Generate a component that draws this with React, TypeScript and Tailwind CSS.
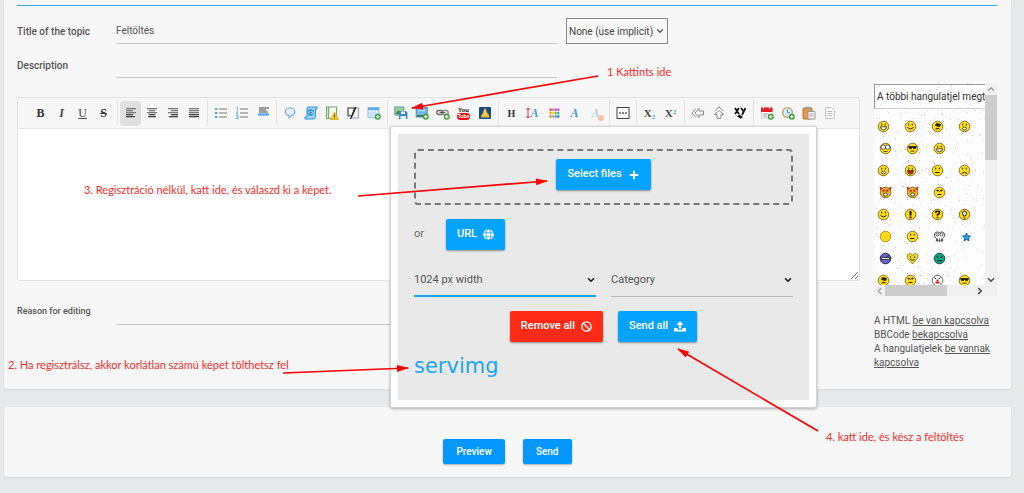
import React from 'react';
import { Ban, ChevronDown, ChevronLeft, ChevronRight, ChevronUp, Plus } from 'lucide-react';
import { FaGlobe } from 'react-icons/fa';

interface Tool {
  name: string;
  icon: React.ReactNode;
  active?: boolean;
}

const Icon: React.FC<{ children: React.ReactNode }> = ({ children }) => (
  <svg width="14" height="14" viewBox="0 0 14 14" aria-hidden="true">
    {children}
  </svg>
);

const Bars: React.FC<{ rows: number[][] }> = ({ rows }) => (
  <Icon>
    {rows.map(([x, w], i) => (
      <rect key={i} x={x} y={2 + i * 2} width={w} height="1.3" fill={i < 3 ? '#777' : '#444'} />
    ))}
  </Icon>
);

const AddBadge = () => (
  <g>
    <circle cx="10.8" cy="10.8" r="3" fill="#3f9a3a" />
    <path d="M10.8 9v3.6M9 10.8h3.6" stroke="#fff" strokeWidth="1.1" />
  </g>
);

const Letter: React.FC<{ className: string; children: React.ReactNode }> = ({ className, children }) => (
  <span className={`font-["Liberation_Serif",serif] text-[12px] leading-none ${className}`}>{children}</span>
);

const GROUPS: Tool[][] = [
  [
    { name: 'Bold', icon: <Letter className="font-bold text-[#333]">B</Letter> },
    { name: 'Italic', icon: <Letter className="font-bold italic text-[#444]">I</Letter> },
    { name: 'Underline', icon: <Letter className="underline text-[#444]">U</Letter> },
    { name: 'Strikethrough', icon: <Letter className="font-bold line-through text-[#333]">S</Letter> },
  ],
  [
    { name: 'Align left', active: true, icon: <Bars rows={[[2, 10], [2, 7], [2, 10], [2, 7], [2, 9]]} /> },
    { name: 'Center', icon: <Bars rows={[[2, 10], [4, 6], [2, 10], [4, 6], [3, 8]]} /> },
    { name: 'Align right', icon: <Bars rows={[[2, 10], [5, 7], [2, 10], [5, 7], [3, 9]]} /> },
    { name: 'Justify', icon: <Bars rows={[[2, 10], [2, 10], [2, 10], [2, 10], [2, 10]]} /> },
  ],
  [
    {
      name: 'Bullet list',
      icon: (
        <Icon>
          <path d="M5 3h8M5 7h8M5 11h8" stroke="#777" />
          <path d="M1 3h2.4M1 7h2.4M1 11h2.4" stroke="#4aa3ee" strokeWidth="2.2" />
        </Icon>
      ),
    },
    {
      name: 'Ordered list',
      icon: (
        <Icon>
          <path d="M5 3h8M5 7h8M5 11h8" stroke="#777" />
          <path d="M1.4 1.5h1v3M1.2 5.8h1.6L1.4 8h1.8M1.2 9.5h1.8v3H1.2M1.6 11h1.4" stroke="#64b0f0" fill="none" />
        </Icon>
      ),
    },
    {
      name: 'Horizontal rule',
      icon: (
        <Icon>
          <path d="M3 2h10M3 4h7M3 6h9" stroke="#444" strokeWidth="1.2" />
          <path d="M2 8.5h11" stroke="#5ba9f5" strokeWidth="2.4" />
        </Icon>
      ),
    },
  ],
  [
    {
      name: 'Quote',
      icon: (
        <Icon>
          <ellipse cx="7" cy="5.8" rx="4.8" ry="3.8" fill="#e2f0fc" stroke="#69a8df" strokeWidth="1.2" />
          <path d="M6 9.2v3.2l3-3.4" fill="#e2f0fc" stroke="#69a8df" />
        </Icon>
      ),
    },
    {
      name: 'Code',
      icon: (
        <Icon>
          <path d="M4 1h9v2h-1.5v7.5q0 2.5-2 2.5H1v-2h2V3q0-2 1-2z" fill="#9bd2f7" stroke="#2f92da" />
          <circle cx="6.5" cy="6.5" r="3.2" fill="#2590dd" />
          <path d="M5.8 5 4.5 6.5 5.8 8M7.4 5l1.3 1.5L7.4 8" stroke="#fff" fill="none" />
        </Icon>
      ),
    },
    {
      name: 'Spoiler',
      icon: (
        <Icon>
          <rect x="1.5" y="1" width="10" height="11.5" fill="#f4fae9" stroke="#78a36d" />
          <path d="M3.5 1v11" stroke="#78b36d" strokeWidth="1.5" />
          <path d="M9.5 6l4 7.5h-8z" fill="#f6cc25" stroke="#d6a514" strokeWidth=".7" />
          <path d="M9.5 8.5v2.3M9.5 11.5v1" stroke="#604600" />
        </Icon>
      ),
    },
    {
      name: 'Hidden',
      icon: (
        <Icon>
          <path d="M7 2h5.5v10H5" fill="#f2f2f2" stroke="#aaa" strokeWidth="1.2" />
          <path d="M2 2h6.5l-2.3 7.5L2 10z" fill="#fff" stroke="#333" strokeWidth="1.1" />
          <path d="M10 1 4.5 13" stroke="#222" strokeWidth="1.3" />
        </Icon>
      ),
    },
    {
      name: 'Table',
      icon: (
        <Icon>
          <rect x="1" y="1.5" width="11" height="10" fill="#e9f5ff" stroke="#86bde8" />
          <path d="M1 3h11" stroke="#63aee9" strokeWidth="2.5" />
          <path d="M1 7h11M1 9.3h11M5 4v8M8.5 4v8" stroke="#acd2ee" strokeWidth=".8" />
          <AddBadge />
        </Icon>
      ),
    },
  ],
  [
    {
      name: 'Host an image',
      icon: (
        <Icon>
          <rect x=".8" y="1" width="9" height="8" fill="#9fd184" stroke="#5c9bc4" />
          <path d="M1.5 8l3-4 3 4z" fill="#378b36" />
          <path d="M5 5h7l1.4 1.4V13H5z" fill="#3d86cc" />
          <path d="M7 5.5h4V8H7zM6.5 10h5.4v3H6.5z" fill="#e8f3fb" />
        </Icon>
      ),
    },
    {
      name: 'Image',
      icon: (
        <Icon>
          <rect x="1.2" y="1.5" width="11" height="9.5" fill="#72b8ed" stroke="#4a8dbe" />
          <path d="M2 9h9.5v1.7H2z" fill="#397747" />
          <path d="M3 4.5h7" stroke="#b7ddf7" strokeWidth="1.5" />
          <AddBadge />
        </Icon>
      ),
    },
    {
      name: 'Link',
      icon: (
        <Icon>
          <rect x=".8" y="4.5" width="6" height="4" rx="2" fill="none" stroke="#666" strokeWidth="1.4" />
          <rect x="5.8" y="4.5" width="6.4" height="4" rx="2" fill="none" stroke="#888" strokeWidth="1.4" />
          <path d="M3.5 6.5h6" stroke="#555" />
          <AddBadge />
        </Icon>
      ),
    },
    {
      name: 'YouTube',
      icon: (
        <span className='flex flex-col items-center font-["Liberation_Sans",sans-serif] text-[6px] font-bold leading-[6px] text-black'>
          <span>You</span>
          <span className="rounded-sm bg-[#ed0c0c] px-px text-[5px] leading-[7px] text-white">Tube</span>
        </span>
      ),
    },
    {
      name: 'Flame',
      icon: (
        <Icon>
          <rect x="1" y="1" width="12" height="12" rx="1" fill="#174c88" />
          <path d="M7 2q2 2 1.6 4.3Q12 9 11 11.5H3Q2.4 9 5 7q.2-3 2-5z" fill="#f6ba24" />
          <path d="M7 5v5" stroke="#fff1a8" />
        </Icon>
      ),
    },
  ],
  [
    { name: 'Headers', icon: <Letter className="font-bold text-[#333]"><span className="text-[10px]">H</span></Letter> },
    {
      name: 'Font size',
      icon: (
        <span className="flex items-center">
          <svg width="4" height="12" viewBox="0 0 4 12" aria-hidden="true">
            <path d="M2 1v10M.5 3 2 1l1.5 2M.5 9 2 11l1.5-2" stroke="#e23434" fill="none" />
          </svg>
          <Letter className="font-bold italic text-[#4a9ae0]">A</Letter>
        </span>
      ),
    },
    {
      name: 'Color',
      icon: (
        <Icon>
          {['#e33', '#f77', '#9a4fd0', '#d3f', '#f90', '#fc3', '#5b5', '#3aa', '#f55', '#6c6', '#38d', '#55b'].map((c, i) => (
            <rect key={i} x={2.5 + (i % 4) * 2.6} y={2.5 + Math.floor(i / 4) * 3.4} width="2" height="2.4" fill={c} />
          ))}
        </Icon>
      ),
    },
    { name: 'Font', icon: <Letter className="font-bold italic text-[#4a94d6]">A</Letter> },
    {
      name: 'Remove formatting',
      icon: (
        <span className="relative flex opacity-40">
          <Letter className="font-bold italic text-[#4a94d6]">A</Letter>
          <span className="absolute -bottom-0.5 -right-1 size-[6px] rounded-full bg-[#f07830]" />
        </span>
      ),
    },
  ],
  [
    {
      name: 'Others',
      icon: (
        <Icon>
          <rect x="1" y="1.5" width="12" height="11" fill="#fff" stroke="#444" />
          <path d="M3.2 7h1.6M6.2 7h1.6M9.2 7h1.6" stroke="#333" strokeWidth="1.5" />
        </Icon>
      ),
    },
  ],
  [
    {
      name: 'Subscript',
      icon: <Letter className="font-bold text-[#444]"><span className="text-[11px]">X</span><sub className="text-[7px] text-[#3a9df0]">2</sub></Letter>,
    },
    {
      name: 'Superscript',
      icon: <Letter className="font-bold text-[#444]"><span className="text-[11px]">X</span><sup className="text-[7px] text-[#3a9df0]">2</sup></Letter>,
    },
  ],
  [
    {
      name: 'Scroll left',
      icon: (
        <Icon>
          <path d="M5 2.5 1 7l4 4.5M8 2.5 4 7l4 4.5V9h4.5V5H8z" fill="#fff" stroke="#888" />
        </Icon>
      ),
    },
    {
      name: 'Scroll up',
      icon: (
        <Icon>
          <path d="M2.5 5 7 1l4.5 4M2.5 8.5 7 4.5l4.5 4H9v3.8H5V8.5z" fill="#fff" stroke="#888" />
        </Icon>
      ),
    },
    {
      name: 'Random',
      icon: (
        <Icon>
          <path d="M2 2l4 6M6 2 2 8M8 2l2.3 3M12.5 2 9 9" stroke="#111" strokeWidth="1.7" />
          <path d="M4 10.3l3-2v4zM7 9l3 2-3 2z" fill="#111" />
        </Icon>
      ),
    },
  ],
  [
    {
      name: 'Date',
      icon: (
        <Icon>
          <rect x="1.5" y="2" width="10.5" height="10" fill="#fff" stroke="#ccc" />
          <path d="M1 1.5h11.5V6H1z" fill="#e81c24" />
          <path d="M3.5 0v3M9.5 0v3" stroke="#fff" />
          <path d="M3 8h6M3 10h4" stroke="#999" />
          <AddBadge />
        </Icon>
      ),
    },
    {
      name: 'Time',
      icon: (
        <Icon>
          <circle cx="6.5" cy="6.5" r="4.8" fill="#d8edfb" stroke="#c9a872" strokeWidth="1.6" />
          <path d="M6.5 3.5v3.2h2.3" stroke="#4a8dc4" fill="none" />
          <AddBadge />
        </Icon>
      ),
    },
    {
      name: 'Paste',
      icon: (
        <Icon>
          <rect x="1" y="2" width="9" height="11" rx="1" fill="#e39a4e" stroke="#b9742e" />
          <rect x="3.2" y=".8" width="4.5" height="2.4" fill="#999" />
          <path d="M6 5.5h7V13H6z" fill="#f3f3f3" stroke="#999" />
          <path d="M7.5 8h4M7.5 10h4" stroke="#aaa" />
        </Icon>
      ),
    },
    {
      name: 'Switch editor mode',
      icon: (
        <Icon>
          <path d="M2.5 1.5h6l3 3v8h-9z" fill="#fafafa" stroke="#c4c4c4" />
          <path d="M4.3 5.5h5M4.3 7.5h5M4.3 9.5h5" stroke="#bbb" />
        </Icon>
      ),
    },
  ],
];

const Toolbar = () => (
  <div className="flex h-[31px] items-center overflow-hidden border-b border-[#e6e6e6] pl-2.5">
    {GROUPS.map((group, i) => (
      <div key={i} className="flex h-[26px] shrink-0 items-center border-r border-[#e2e2e2] pl-0.5 pr-[3px] last:border-r-0">
        {group.map((tool) => (
          <button
            key={tool.name}
            type="button"
            aria-label={tool.name}
            className={`flex h-[25px] w-[21px] items-center justify-center rounded-sm ${tool.active ? 'bg-[#e0e0e0]' : ''}`}
          >
            {tool.icon}
          </button>
        ))}
      </div>
    ))}
  </div>
);

// Drawn on top of a round yellow head, 12x12 box
const FACES: Record<string, React.ReactNode> = {
  grin: <path d="M3 6.3h6q0 3-3 3t-3-3z" fill="#fff" stroke="#222" strokeWidth=".8" />,
  smile: <path d="M3 7q3 3 6 0" fill="none" stroke="#222" />,
  laugh: <path d="M3 6h6q0 3.6-3 3.6T3 6z" fill="#c22" stroke="#222" strokeWidth=".7" />,
  flat: <path d="M3.5 8h4.5" stroke="#222" />,
  sad: <path d="M3.3 9q2.7-2.6 5.4 0" fill="none" stroke="#222" />,
  open: <ellipse cx="6" cy="8" rx="2" ry="1.5" fill="#fff" stroke="#222" strokeWidth=".8" />,
  cool: <path d="M2 4h8l-1 2H7L6 5 5 6H3zM4 8.6h4" fill="#111" stroke="#222" strokeWidth=".8" />,
  glasses: (
    <g fill="#fff" stroke="#333" strokeWidth=".8">
      <circle cx="3.8" cy="4.6" r="2.2" />
      <circle cx="8.2" cy="4.6" r="2.2" />
      <path d="M4 9h4" />
    </g>
  ),
  hat: <path d="M5 3l4 1-1 2-4-1zM4 8.5q3-1 4 0" fill="#222" stroke="#222" />,
  blink: <path d="M3 4h2l1 1 1-1h2M4 8h4" fill="none" stroke="#222" />,
};

const Head: React.FC<{ kind: string }> = ({ kind }) => (
  <svg width="13" height="13" viewBox="-.5 -.5 13 13" aria-hidden="true">
    {kind === 'star' && (
      <path d="M6 2.5l1.2 2.7 2.9.3-2.2 2 .7 2.9L6 8.9l-2.6 1.5.7-2.9-2.2-2 2.9-.3z" fill="#2299e8" stroke="#124f82" strokeWidth=".8" />
    )}
    {kind === 'heart' && (
      <g>
        <path d="M6 11.5.8 5.5Q.2 1 3.2 1 5 1 6 3q1-2 2.8-2 3 0 2.4 4.5z" fill="#ecdb20" stroke="#83750f" strokeWidth=".8" />
        <path d="M4 4v1.4M8 4v1.4M4 7q2 1.5 4 0" fill="none" stroke="#222" />
      </g>
    )}
    {kind === 'ball' && <circle cx="6" cy="6" r="5.3" fill="#ffd911" stroke="#9b7b10" strokeWidth=".8" />}
    {kind === 'ninja' && (
      <g>
        <circle cx="6" cy="6" r="5.3" fill="#6265c9" stroke="#24264f" />
        <path d="M2 5h8v2H2zM7 4l3-1" fill="#eee" stroke="#222" strokeWidth=".8" />
      </g>
    )}
    {kind === 'green' && (
      <g>
        <circle cx="6" cy="6" r="5.3" fill="#16a07c" stroke="#0c4e3c" />
        <path d="M3 4l2 1M9 4 7 5M3.5 8.8q2.5-2 5 0" fill="none" stroke="#022" />
      </g>
    )}
    {kind === 'skull' && (
      <g fill="#fff" stroke="#444" strokeWidth=".9">
        <path d="M1 3.5Q2 .5 6 2q4-1.5 5 1.5Q11.5 7 9 8v2.5H3V8Q.5 7 1 3.5z" />
        <circle cx="4" cy="4" r="1.5" />
        <circle cx="8" cy="4" r="1.5" />
        <path d="M4 8v2.5M6 8v2.5M8 8v2.5" />
      </g>
    )}
    {kind === 'clown' && (
      <g>
        <circle cx="6" cy="6" r="5.3" fill="#fff" stroke="#555" strokeWidth=".9" />
        <path d="M3 3l1.5 1.5M9 3 7.5 4.5" stroke="#222" />
        <path d="M6 5v1.5M4 8h4" stroke="#d11" strokeWidth="2" />
      </g>
    )}
    {(kind === 'bang' || kind === 'question' || kind === 'idea') && (
      <g>
        <circle cx="6" cy="6" r="5.3" fill="#ffd911" stroke="#765d0c" strokeWidth=".9" />
        {kind === 'bang' && <path d="M6 2.5v4.5M6 8v1.8" stroke="#111" strokeWidth="2" />}
        {kind === 'question' && <path d="M4 4.2q0-1.5 2-1.5t2 1.5Q8 5.5 6 6v1.2M6 8.3v1.5" fill="none" stroke="#111" strokeWidth="1.5" />}
        {kind === 'idea' && <path d="M6 2.5q2 0 2 2L7 7.5H5l-1-3q0-2 2-2zM5 9.5h2" fill="#fff" stroke="#222" />}
      </g>
    )}
    {(FACES[kind] || kind === 'devil') && (
      <g>
        {kind === 'devil' && <path d="M0 0l3.5 1.5L1 4zM12 0 8.5 1.5 11 4z" fill="#c22" />}
        <circle cx="6" cy="6" r="5.3" fill={kind === 'devil' ? '#eab31f' : '#ffdc1c'} stroke="#7a6220" strokeWidth=".9" />
        {kind !== 'glasses' && kind !== 'cool' && kind !== 'hat' && (
          <path d="M4.2 3.2v1.8M7.8 3.2v1.8" stroke={kind === 'devil' ? '#c00' : '#222'} strokeWidth={kind === 'devil' ? 2 : 1} />
        )}
        {kind === 'devil' ? FACES.open : FACES[kind]}
      </g>
    )}
  </svg>
);

const SMILEYS = [
  ['grin', 'smile', 'hat', 'open'],
  ['glasses', 'cool', 'grin'],
  ['open', 'laugh', 'flat', 'sad'],
  ['devil', 'devil', 'blink'],
  ['smile', 'bang', 'question', 'idea'],
  ['ball', 'flat', 'skull', 'star'],
  ['ninja', 'heart', 'green'],
  ['hat', 'blink', 'clown', 'cool'],
];

const SPECKS = Array.from({ length: 420 }, (_, i) => ({
  x: (i * 73 + ((i * i) % 41)) % 112,
  y: (i * 47 + ((i * i * 7) % 97)) % 202,
}));

const SmileyBox = () => (
  <div className="grid h-[213px] grid-cols-[1fr_12px] grid-rows-[1fr_11px] bg-[#f0f0f0]">
    <div className="relative overflow-hidden bg-[#fdfdfd]">
      <svg className="absolute inset-0 size-full" aria-hidden="true">
        {SPECKS.map((s, i) => (
          <rect key={i} x={s.x} y={s.y} width="1" height="1" fill={i % 4 ? '#e2e2e2' : '#c8c8c8'} />
        ))}
      </svg>
      <div className="relative">
        <button
          type="button"
          className="h-[25px] w-full whitespace-nowrap border border-r-0 border-[#999] border-b-[#d0d0d0] pl-0.5 text-left text-[10px] text-[#333]"
        >
          A többi hangulatjel megt
        </button>
        <div className="mt-1.5 flex flex-col">
          {SMILEYS.map((row, i) => (
            <div key={i} className={`flex h-[22px] items-center ${row.length === 3 || row[0] === 'ball' ? 'pl-[5px]' : 'pl-[3px]'}`}>
              {row.map((kind, j) => (
                <span key={j} className="w-[27px] shrink-0">
                  <Head kind={kind} />
                </span>
              ))}
            </div>
          ))}
        </div>
      </div>
    </div>
    <div className="flex flex-col items-center">
      <ChevronUp className="h-3 w-2.5 text-[#999]" strokeWidth={3} />
      <div className="h-[65px] w-full bg-[#cdcdcd]" />
      <ChevronDown className="mt-auto size-2.5 text-[#555]" strokeWidth={4} />
    </div>
    <div className="flex items-center">
      <ChevronLeft className="h-2.5 w-[11px] text-[#aaa]" strokeWidth={4} />
      <div className="h-full w-[62px] bg-[#cdcdcd]" />
      <ChevronRight className="ml-auto size-2.5 text-[#444]" strokeWidth={4} />
    </div>
  </div>
);

const POPUP_BUTTON = 'flex items-center gap-1.5 rounded-xs px-[11px] h-[31px] text-[11px] font-medium text-white shadow-[0_1px_2px_rgba(0,0,0,0.4)]';

const PopupSelect: React.FC<{ label: string; value: string; className: string }> = ({ label, value, className }) => (
  <div className={`relative h-8 flex-1 ${className}`}>
    <select aria-label={label} className="h-[30px] w-full appearance-none bg-transparent pr-4 text-[11px] text-[#555]">
      <option>{value}</option>
    </select>
    <ChevronDown className="pointer-events-none absolute right-0 top-2.5 size-2.5 text-[#222]" strokeWidth={4} />
  </div>
);

const UploadPopup = () => (
  <div className="absolute left-[386px] top-[126px] w-[427px] rounded-xs border border-[#d2d2d2] bg-white p-[7px] shadow-[0_1px_3px_rgba(0,0,0,0.3)]">
    <div className="h-[266px] bg-[#e9e9e9] px-4 pt-[15px]">
      <div className="flex h-14 justify-center rounded-sm border-2 border-dashed border-[#777] pt-2">
        <button type="button" className={`${POPUP_BUTTON} bg-[#04a3ff]`}>
          Select files <Plus className="size-3" strokeWidth={4} />
        </button>
      </div>
      <div className="mt-3.5 flex items-center">
        <span className="w-8 text-[11px] text-[#666]">or</span>
        <button type="button" className={`${POPUP_BUTTON} bg-[#04a3ff]`}>
          URL <FaGlobe className="size-[11px]" />
        </button>
      </div>
      <div className="mt-[15px] flex gap-[15px]">
        <PopupSelect label="Image size" value="1024 px width" className="border-b-2 border-[#1ba4f5]" />
        <PopupSelect label="Category" value="Category" className="border-b border-[#bbb]" />
      </div>
      <div className="mt-3.5 flex justify-center gap-[15px]">
        <button type="button" className={`${POPUP_BUTTON} bg-[#ff2b17]`}>
          Remove all <Ban className="size-[11px]" strokeWidth={3} />
        </button>
        <button type="button" className={`${POPUP_BUTTON} bg-[#04a3ff]`}>
          Send all
          <svg width="12" height="11" viewBox="0 0 12 11" fill="currentColor" aria-hidden="true">
            <path d="M6 0l3.5 3.7H7.2V7.5H4.8V3.7H2.5zM0 7h3.5v1.7h5V7H12v3.5H0z" />
          </svg>
        </button>
      </div>
      <a href="#servimg" className='mt-3 inline-block font-["DejaVu_Sans",sans-serif] text-[21px] leading-6 text-[#1da5f8]'>
        servimg
      </a>
    </div>
  </div>
);

const Field: React.FC<{ id: string; label: string; value?: string; small?: boolean; children?: React.ReactNode }> = ({
  id,
  label,
  value,
  small,
  children,
}) => (
  <div className="flex h-[26px] items-center">
    <label htmlFor={id} className={`w-[99px] shrink-0 font-medium text-[#555] ${small ? 'text-[9px]' : 'text-[10px]'}`}>
      {label}
    </label>
    <input
      id={id}
      defaultValue={value}
      className="h-full w-[441px] border-b border-[#c8c8c8] bg-transparent text-[10px] text-[#555] outline-none"
    />
    {children}
  </div>
);

const NOTE = 'absolute whitespace-nowrap text-[11px] leading-[14px] font-[Lato,sans-serif] text-[#fb2b2b]';

const ARROWS = [
  [598, 76, 412, 108],
  [283, 373, 408, 368],
  [358, 196, 547, 181],
  [818, 431, 678, 349],
];

const Annotations = () => (
  <div className="pointer-events-none absolute inset-0">
    <svg className="absolute inset-0 size-full" aria-hidden="true">
      <defs>
        <marker id="tip" markerWidth="12" markerHeight="8" refX="11" refY="3.5" orient="auto" markerUnits="userSpaceOnUse">
          <path d="M0 0 12 3.5 0 7z" fill="#f00" />
        </marker>
      </defs>
      {ARROWS.map(([x1, y1, x2, y2]) => (
        <line key={x1} x1={x1} y1={y1} x2={x2} y2={y2} stroke="#f00" strokeWidth="1.7" markerEnd="url(#tip)" />
      ))}
    </svg>
    <span className={`${NOTE} left-[607px] top-[65px]`}>1 Kattints ide</span>
    <span className={`${NOTE} left-[8px] top-[358px]`}>2. Ha regisztrálsz, akkor korlátlan számú képet tölthetsz fel</span>
    <span className={`${NOTE} left-[84px] top-[183px]`}>3. Regisztráció nélkül, katt ide, és válaszd ki a képet.</span>
    <span className={`${NOTE} left-[826px] top-[430px]`}>4. katt ide, és kész a feltöltés</span>
  </div>
);

export default function App() {
  return (
    <div className="relative min-h-screen bg-[#e7e9eb] pl-1 pr-[13px] font-[Roboto,sans-serif]">
      <main className="relative rounded-b-xs bg-[#f7f7f7] pb-[19px] pl-[13px] pr-3.5 pt-[5px] shadow-[0_1px_2px_rgba(0,0,0,0.08)]">
        <div className="border-t border-[#39a5f5]" />
        <div className="mt-3 flex flex-col gap-2">
          <Field id="title" label="Title of the topic" value="Feltöltés">
            <div className="relative ml-[9px]">
              <select
                aria-label="Topic icon"
                className="h-[26px] w-[102px] appearance-none border border-[#888] bg-[#f7f7f7] pl-0.5 text-[10px] text-[#444]"
              >
                <option>None (use implicit)</option>
              </select>
              <ChevronDown className="pointer-events-none absolute right-[3px] top-2 size-2.5 text-[#555]" strokeWidth={3} />
            </div>
          </Field>
          <Field id="description" label="Description" />
        </div>
        <div className="mt-[5px] flex gap-3.5">
          <div className="min-w-0 flex-1 pt-3.5">
            <div className="rounded-xs border border-[#e3e3e3]">
              <Toolbar />
              <textarea aria-label="Message" className="block h-[151px] w-full bg-white outline-none" />
            </div>
            <div className="mt-[18px]">
              <Field id="reason" label="Reason for editing" small />
            </div>
          </div>
          <aside className="w-[123px] shrink-0">
            <SmileyBox />
            <p className="mt-[18px] text-[10px] leading-[14px] text-[#555]">
              A HTML <a href="#html" className="underline">be van kapcsolva</a>
              <br />
              BBCode <a href="#bbcode" className="underline">bekapcsolva</a>
              <br />
              A hangulatjelek <a href="#smileys" className="underline">be vannak kapcsolva</a>
            </p>
          </aside>
        </div>
        <UploadPopup />
      </main>
      <section className="mt-[18px] flex justify-center gap-[18px] rounded-xs bg-[#f7f7f7] pb-[13px] pt-8 shadow-[0_1px_2px_rgba(0,0,0,0.08)]">
        {['Preview', 'Send'].map((text) => (
          <button
            key={text}
            type="button"
            className="h-[25px] rounded-xs bg-[#0498ff] px-[13px] text-[10px] font-medium text-white shadow-[0_1px_2px_rgba(0,0,0,0.3)]"
          >
            {text}
          </button>
        ))}
      </section>
      <Annotations />
    </div>
  );
}
